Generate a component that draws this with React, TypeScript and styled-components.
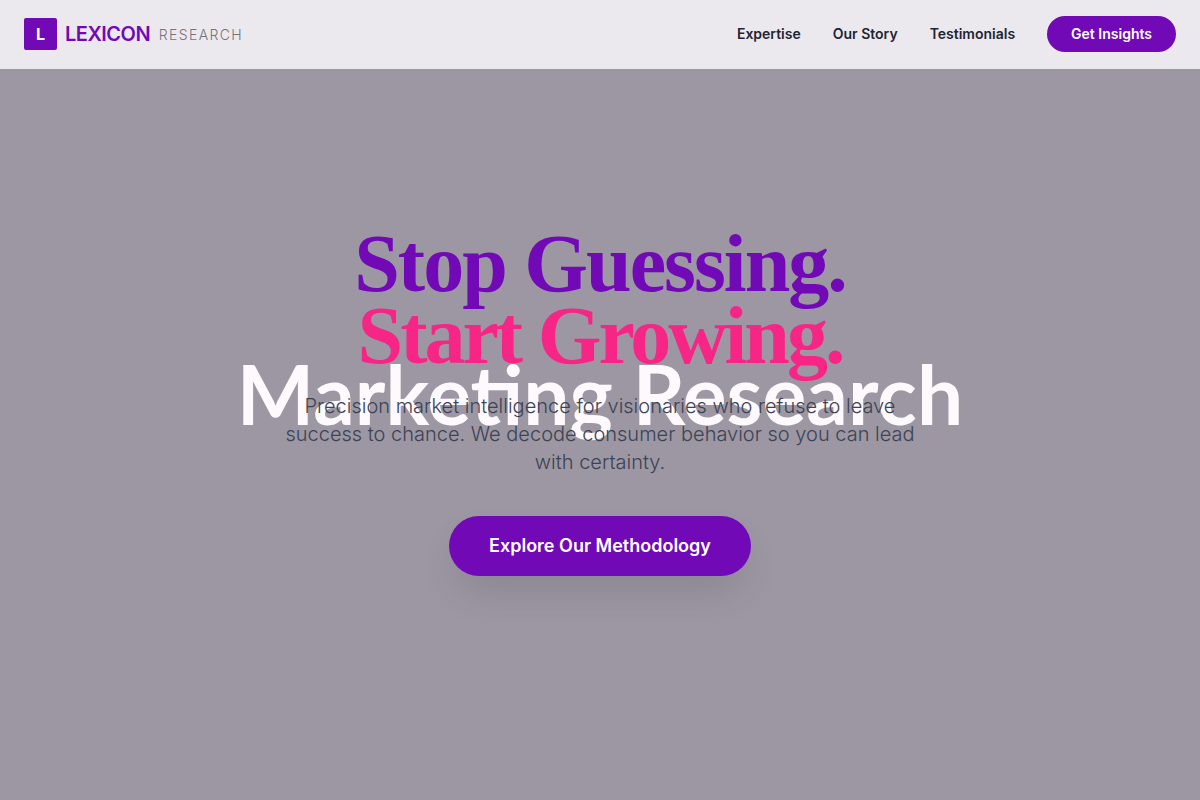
import styled, { createGlobalStyle } from "styled-components";

const GlobalStyle = createGlobalStyle`
  html, body {
    margin: 0;
    padding: 0;
    background: #9c97a3;
  }
  * {
    box-sizing: border-box;
  }
`;

const Page = styled.div`
  min-height: 800px;
  display: flex;
  flex-direction: column;
  font-family: Inter, "Liberation Sans", sans-serif;
  background: #9c97a3;
  overflow: hidden;
`;

const Nav = styled.nav`
  height: 69px;
  padding: 0 24px 1px;
  display: flex;
  align-items: center;
  justify-content: space-between;
  background: #ece9ee;
`;

const Brand = styled.div`
  display: flex;
  align-items: center;
`;

const LogoMark = styled.div`
  width: 33px;
  height: 32px;
  margin-right: 8px;
  border-radius: 2px;
  background: #7209b7;
  color: #fff;
  display: flex;
  align-items: center;
  justify-content: center;
  font-size: 16px;
  font-weight: 700;
`;

const BrandName = styled.span`
  font-size: 20px;
  font-weight: 600;
  letter-spacing: -0.5px;
  color: #7209b7;
`;

const BrandSub = styled.span`
  margin-left: 8.5px;
  font-size: 14px;
  font-weight: 300;
  letter-spacing: 1.4px;
  color: #77737d;
`;

const Links = styled.div`
  display: flex;
  align-items: center;
  gap: 32px;
`;

const NavLink = styled.a`
  font-size: 14px;
  line-height: 20px;
  font-weight: 600;
  color: #1f2433;
`;

const NavButton = styled.a`
  height: 36px;
  padding: 0 24px;
  border-radius: 18px;
  background: #7209b7;
  color: #fff;
  font-size: 14px;
  line-height: 20px;
  font-weight: 600;
  display: flex;
  align-items: center;
`;

const Hero = styled.main`
  position: relative;
  flex: 1;
  padding-top: 159px;
  display: flex;
  flex-direction: column;
  align-items: center;
  text-align: center;
`;

const Headline = styled.h1`
  margin: 0 0 20px;
  font-family: "Liberation Serif", serif;
  font-size: 82px;
  line-height: 72px;
  font-weight: 700;
`;

const HeadLine = styled.span<{ $color: string; $tracking: number }>`
  display: block;
  color: ${(p) => p.$color};
  letter-spacing: ${(p) => p.$tracking}px;
`;

const Overlay = styled.div`
  position: absolute;
  top: 274px;
  left: 0;
  right: 0;
  font-family: Lato, sans-serif;
  font-size: 82px;
  line-height: 100px;
  font-weight: 700;
  color: #fdf9fc;
`;

const Lead = styled.p`
  position: relative;
  width: 672px;
  margin: 0 0 40px;
  font-size: 20px;
  line-height: 28px;
  font-weight: 300;
  color: #3d4354;
`;

const Cta = styled.a`
  position: relative;
  height: 60px;
  padding: 0 40px 2px;
  border-radius: 30px;
  background: #7209b7;
  color: #fff;
  font-size: 18px;
  font-weight: 600;
  display: flex;
  align-items: center;
  box-shadow: 0 20px 40px -8px rgba(0, 0, 0, 0.13);
`;

export default function App() {
  return (
    <Page>
      <GlobalStyle />
      <Nav>
        <Brand>
          <LogoMark>L</LogoMark>
          <BrandName>LEXICON</BrandName>
          <BrandSub>RESEARCH</BrandSub>
        </Brand>
        <Links>
          <NavLink>Expertise</NavLink>
          <NavLink>Our Story</NavLink>
          <NavLink>Testimonials</NavLink>
          <NavButton>Get Insights</NavButton>
        </Links>
      </Nav>
      <Hero>
        <Headline>
          <HeadLine $color="#7209b7" $tracking={-2}>Stop Guessing.</HeadLine>
          <HeadLine $color="#f72585" $tracking={-3}>Start Growing.</HeadLine>
        </Headline>
        <Overlay>Marketing Research</Overlay>
        <Lead>
          Precision market intelligence for visionaries who refuse to leave
          <br />
          success to chance. We decode consumer behavior so you can lead
          <br />
          with certainty.
        </Lead>
        <Cta>Explore Our Methodology</Cta>
      </Hero>
    </Page>
  );
}
